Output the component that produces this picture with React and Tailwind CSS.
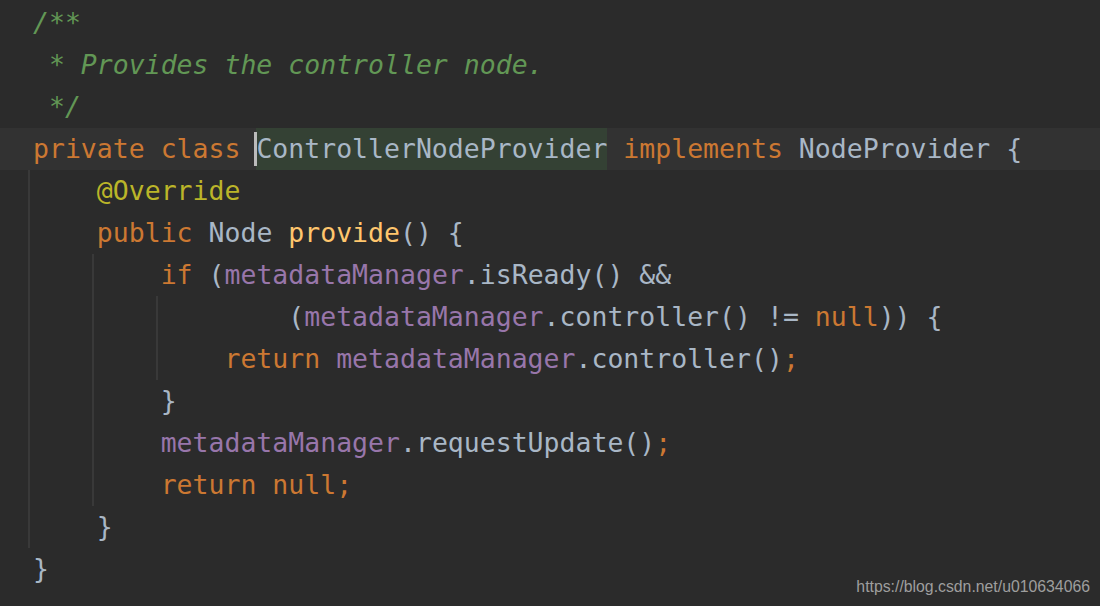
import React from "react";

const C = {
  c: "text-[#629755] italic",
  k: "text-[#CC7832]",
  t: "text-[#A9B7C6]",
  f: "text-[#9876AA]",
  m: "text-[#FFC66D]",
  a: "text-[#BBB529]",
};

const S = ({ k = "t", children }) => <span className={C[k]}>{children}</span>;

const lines = [
  [<S k="c">/**</S>],
  [<S k="c"> * Provides the controller node.</S>],
  [<S k="c"> */</S>],
  null,
  [<S>    </S>, <S k="a">@Override</S>],
  [<S>    </S>, <S k="k">public</S>, <S> Node </S>, <S k="m">provide</S>, <S>() {"{"}</S>],
  [<S>        </S>, <S k="k">if</S>, <S> (</S>, <S k="f">metadataManager</S>, <S>.isReady() &amp;&amp;</S>],
  [<S>                (</S>, <S k="f">metadataManager</S>, <S>.controller() != </S>, <S k="k">null</S>, <S>)) {"{"}</S>],
  [<S>            </S>, <S k="k">return</S>, <S> </S>, <S k="f">metadataManager</S>, <S>.controller()</S>, <S k="k">;</S>],
  [<S>        {"}"}</S>],
  [<S>        </S>, <S k="f">metadataManager</S>, <S>.requestUpdate()</S>, <S k="k">;</S>],
  [<S>        </S>, <S k="k">return null;</S>],
  [<S>    {"}"}</S>],
  [<S>{"}"}</S>],
];

export default function App() {
  return (
    <div className="w-[1100px] h-[606px] bg-[#2B2B2B] overflow-hidden relative pt-[2px]">
      <div
        className="relative text-[26.5px] leading-[42px] whitespace-pre"
        style={{ fontFamily: '"DejaVu Sans Mono", monospace' }}
      >
        {lines.map((l, i) =>
          l === null ? (
            <div key={i} className="h-[42px] bg-[#323232] pl-[33px] flex">
              <S k="k">private class </S>
              <span className="relative bg-[#344134] text-[#A9B7C6]">
                ControllerNodeProvider
                <span className="absolute left-[-2px] top-[4px] w-[3px] h-[34px] bg-[#BBBBBB]" />
              </span>
              <S> </S>
              <S k="k">implements</S>
              <S> NodeProvider {"{"}</S>
            </div>
          ) : (
            <div key={i} className="h-[42px] pl-[33px]">
              {l.map((x, j) => (
                <React.Fragment key={j}>{x}</React.Fragment>
              ))}
            </div>
          )
        )}
        <div className="absolute left-[28px] top-[168px] w-[2px] h-[378px] bg-[#393939]" />
        <div className="absolute left-[92px] top-[252px] w-[2px] h-[252px] bg-[#393939]" />
        <div className="absolute left-[156px] top-[294px] w-[2px] h-[84px] bg-[#393939]" />
      </div>
      <div
        className="absolute right-[10px] bottom-[9px] text-[15.8px] leading-[20px] text-[#9E9E9E]"
        style={{ fontFamily: '"Liberation Sans", Arial, sans-serif' }}
      >
        https://blog.csdn.net/u010634066
      </div>
    </div>
  );
}
